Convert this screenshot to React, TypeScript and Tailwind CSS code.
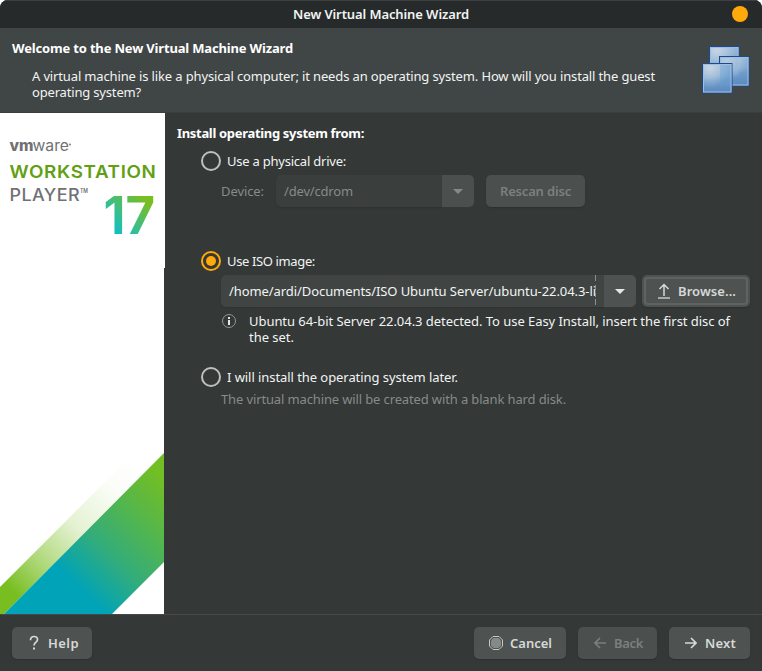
import { useLayoutEffect, useRef, useState, type ReactNode } from "react";

/** A single line of text whose tracking is adjusted so it fills `width` pixels. */
function Line({ width, className = "", children }: { width: number; className?: string; children: string }) {
  const ref = useRef<HTMLSpanElement>(null);
  const [spacing, setSpacing] = useState(0);
  useLayoutEffect(() => {
    if (!ref.current) return;
    const natural = ref.current.getBoundingClientRect().width;
    setSpacing((width - natural) / children.length);
  }, [width, children]);
  return (
    <span
      ref={ref}
      className={`inline-block self-start whitespace-pre leading-4 ${className}`}
      style={{ letterSpacing: `${spacing}px` }}
    >
      {children}
    </span>
  );
}

function Radio({ checked = false }: { checked?: boolean }) {
  return (
    <span
      className={`flex size-5 shrink-0 items-center justify-center rounded-full border-2 ${
        checked ? "border-[#ffa90a]" : "border-[#bdc0be]"
      }`}
    >
      {checked && <span className="size-[10px] rounded-full bg-[#ffa90a]" />}
    </span>
  );
}

function Caret({ className }: { className: string }) {
  return (
    <svg width="10" height="5" viewBox="0 0 10 5" className={className}>
      <path d="M0 0h10L5 5z" fill="currentColor" />
    </svg>
  );
}

function Button({ className, children }: { className: string; children: ReactNode }) {
  return <button className={`flex h-8 items-center rounded-[5px] font-semibold shadow-[0_1px_1px_#2d302f] ${className}`}>{children}</button>;
}

function MachinesIcon() {
  return (
    <svg width="48" height="48" viewBox="0 0 48 48">
      <defs>
        <linearGradient id="pane" x1="0.3" y1="0" x2="0.4" y2="1">
          <stop offset="0" stopColor="#9dbad8" />
          <stop offset="0.45" stopColor="#82a9d1" />
          <stop offset="0.6" stopColor="#6e9bc9" />
          <stop offset="1" stopColor="#5c8ac0" />
        </linearGradient>
        <radialGradient id="shine" cx="0.25" cy="0.15" r="0.7">
          <stop offset="0" stopColor="#dbe2ea" stopOpacity="0.7" />
          <stop offset="1" stopColor="#dbe2ea" stopOpacity="0" />
        </radialGradient>
      </defs>
      {[
        [7, 0],
        [17, 10],
        [0, 17],
      ].map(([x, y]) => (
        <g key={x}>
          <rect x={x + 0.5} y={y + 0.5} width="29.500" height="29.500" fill="url(#pane)" stroke="#1f4a8a" />
          <rect x={x + 1} y={y + 1} width="28" height="28" fill="url(#shine)" />
          <rect x={x + 1.5} y={y + 1.5} width="27.500" height="27.500" fill="none" stroke="#9dbde2" />
        </g>
      ))}
      <path d="M18 19h10v21H18z" fill="#66a0d8" opacity="0.35" />
      <path d="M19 12h17v17H31V17H19z" fill="#8db5dc" opacity="0.3" />
    </svg>
  );
}

function Branding() {
  return (
    <svg width="165" height="155" viewBox="0 0 165 155" fontFamily="Inter, 'Liberation Sans', sans-serif">
      <defs>
        <linearGradient id="version" gradientUnits="userSpaceOnUse" x1="108" y1="121" x2="142" y2="84">
          <stop offset="0" stopColor="#00c1d5" />
          <stop offset="0.5" stopColor="#3dbe86" />
          <stop offset="1" stopColor="#78be20" />
        </linearGradient>
      </defs>
      <text x="9.5" y="38" fontSize="15" fontWeight="800" fill="#717074" textLength="24" lengthAdjust="spacingAndGlyphs">vm</text>
      <text x="32.5" y="38" fontSize="15" fontWeight="400" fill="#717074" textLength="36.5" lengthAdjust="spacingAndGlyphs">ware</text>
      <circle cx="70" cy="31.500" r="0.9" fill="#717074" />
      <text x="9.5" y="64.5" fontSize="17.8" fontWeight="600" fill="#61a014" letterSpacing="0.6" textLength="147" lengthAdjust="spacingAndGlyphs">WORKSTATION</text>
      <text x="9.5" y="87.5" fontSize="17" fontWeight="500" fill="#717074" letterSpacing="0.4" textLength="70.5" lengthAdjust="spacingAndGlyphs">PLAYER</text>
      <text x="80" y="79.5" fontSize="5.5" fontWeight="600" fill="#717074" textLength="8" lengthAdjust="spacingAndGlyphs">TM</text>
      <text x="103.5" y="121" fontSize="52" fontWeight="650" fill="url(#version)" textLength="51.5" lengthAdjust="spacingAndGlyphs">17</text>
    </svg>
  );
}

function Stripes() {
  return (
    <svg width="164" height="164" viewBox="0 0 164 164">
      <defs>
        <linearGradient id="band" gradientUnits="userSpaceOnUse" x1="60" y1="127" x2="160" y2="27">
          <stop offset="0" stopColor="#00a3b8" />
          <stop offset="0.04" stopColor="#00a3b8" />
          <stop offset="0.38" stopColor="#35ad78" />
          <stop offset="0.7" stopColor="#55b64b" />
          <stop offset="1" stopColor="#72be25" />
        </linearGradient>
        <linearGradient id="fade" gradientUnits="userSpaceOnUse" x1="14" y1="143" x2="142" y2="15">
          <stop offset="0" stopColor="#78be20" />
          <stop offset="0.22" stopColor="#78be20" stopOpacity="0.6" />
          <stop offset="0.5" stopColor="#78be20" stopOpacity="0.2" />
          <stop offset="0.8" stopColor="#78be20" stopOpacity="0.03" />
          <stop offset="1" stopColor="#78be20" stopOpacity="0" />
        </linearGradient>
      </defs>
      <path d="M0 137L137 0h27v3L4 164H0z" fill="url(#fade)" />
      <path d="M4 164L164 3v109l-52 52z" fill="url(#band)" />
    </svg>
  );
}

export default function App() {
  return (
    <div className="h-[671px] w-[762px] overflow-hidden bg-white font-['Noto_Sans','Open_Sans',sans-serif] text-[13px] leading-4 text-[#f2f4f3]">
      <div className="flex h-full flex-col overflow-hidden rounded-t-lg bg-[#343837]">
        <header className="flex h-7 shrink-0 items-start border-t border-[#3d4141] bg-[#262a2a] pl-[293px] pr-[14px] pt-[5px]">
          <Line width={176} className="font-semibold">New Virtual Machine Wizard</Line>
          <span className="ml-auto size-4 rounded-full bg-[#ffa90a]" />
        </header>

        <section className="flex h-[85px] shrink-0 border-b border-[#3a3e3d] bg-[#404545] pl-3 pr-3">
          <div className="flex flex-col pt-3">
            <Line width={281} className="font-bold text-white">Welcome to the New Virtual Machine Wizard</Line>
            <div className="mt-3 flex flex-col pl-5">
              <Line width={623}>A virtual machine is like a physical computer; it needs an operating system. How will you install the guest</Line>
              <Line width={109}>operating system?</Line>
            </div>
          </div>
          <div className="ml-auto pt-[18px]">
            <MachinesIcon />
          </div>
        </section>

        <main className="flex h-[501px] shrink-0">
          <aside className="flex w-[165px] shrink-0 flex-col">
            <div className="h-[155px] bg-white">
              <Branding />
            </div>
            <div className="flex w-[164px] grow items-end bg-white">
              <Stripes />
            </div>
          </aside>

          <div className="flex flex-col pl-3 pt-3">
            <Line width={187} className="font-bold text-white">Install operating system from:</Line>
            <div className="flex flex-col pl-6">
              <label className="mt-[10px] flex h-5 items-center">
                <Radio />
                <Line width={119} className="ml-[6px] mt-[2px]">Use a physical drive:</Line>
              </label>
              <div className="mt-1 flex h-8 items-center pl-5 text-[#868b89]">
                <Line width={43} className="mt-2">Device:</Line>
                <div className="ml-3 flex h-8 w-[166px] rounded-l-[5px] bg-[#3a3e3d] pl-2 pt-2 shadow-[0_1px_1px_#303332]">
                  <Line width={69}>/dev/cdrom</Line>
                </div>
                <div className="flex h-8 w-8 items-center justify-center rounded-r-[5px] bg-[#4b4f4e]">
                  <Caret className="text-[#858a88]" />
                </div>
                <Button className="ml-3 w-[99px] bg-[#4b4f4e] pl-[14px] text-[#7b807e]">
                  <Line width={71} className="mt-2">Rescan disc</Line>
                </Button>
              </div>

              <label className="mt-11 flex h-5 items-center">
                <Radio checked />
                <Line width={88} className="ml-[6px] mt-[2px]">Use ISO image:</Line>
              </label>
              <div className="mt-1 flex h-8 pl-5">
                <div className="flex w-[383px] rounded-l-[5px] bg-[#404544] pl-2 shadow-[0_1px_1px_#303332]">
                  <div className="relative w-[367px] pt-2">
                    <Line width={367}>/home/ardi/Documents/ISO Ubuntu Server/ubuntu-22.04.3-li</Line>
                    <svg className="absolute right-0 top-0" width="1" height="32">
                      <path d="M.5 0v6M.5 10v5M.5 18v4M.5 24v6" stroke="#8b908e" />
                    </svg>
                  </div>
                </div>
                <div className="flex w-8 items-center justify-center rounded-r-[5px] bg-[#4e5351]">
                  <Caret className="text-[#e6e8e7]" />
                </div>
                <Button className="ml-[6px] w-[108px] bg-[#4e5351] p-[2px] text-[#d6d9d7]">
                  <span className="flex h-full w-full items-center rounded-[4px] border-2 border-[#5f6462] pl-[12px]">
                    <svg width="12" height="16" viewBox="0 0 12 16" fill="none">
                      <path d="M6 13V1.5M1.5 6L6 1.5L10.500 6" stroke="#d6d9d7" strokeWidth="1.5" />
                      <path d="M0 15h12" stroke="#a4a8a6" strokeWidth="2" />
                    </svg>
                    <Line width={58} className="ml-2 mt-[4px]">Browse...</Line>
                  </span>
                </Button>
              </div>
              <div className="mt-[6px] flex pl-5">
                <svg width="16" height="16" viewBox="0 0 16 16" className="shrink-0">
                  <circle cx="8" cy="8" r="6.500" fill="none" stroke="#929694" />
                  <path d="M7 4h2v2H7zM7 7h2v5H7z" fill="#e6e8e7" />
                </svg>
                <div className="ml-3 flex flex-col">
                  <Line width={481}>Ubuntu 64-bit Server 22.04.3 detected. To use Easy Install, insert the first disc of</Line>
                  <Line width={45}>the set.</Line>
                </div>
              </div>

              <label className="mt-[22px] flex h-5 items-center">
                <Radio />
                <Line width={231} className="ml-[6px] mt-[2px]">I will install the operating system later.</Line>
              </label>
              <div className="mt-1 flex pl-5 text-[#868b89]">
                <Line width={345}>The virtual machine will be created with a blank hard disk.</Line>
              </div>
            </div>
          </div>
        </main>

        <footer className="flex grow items-start border-t border-[#454948] px-3 pt-3 text-[#d6d9d7]">
          <Button className="w-20 bg-[#4e5351] pl-[17px]">
            <svg width="10" height="16" viewBox="0 0 10 16" fill="none" stroke="currentColor" strokeWidth="1.7">
              <path d="M1.500 5.300C1.500 2.600 2.800 1.500 5 1.500S8.500 2.800 8.500 4.700C8.500 7 5 7.200 5 10.500" />
              <path d="M4 13.500h2" strokeWidth="2" />
            </svg>
            <Line width={31} className="ml-[9px] mt-2">Help</Line>
          </Button>
          <Button className="ml-auto w-[92px] bg-[#4e5351] pl-[14px]">
            <svg width="16" height="16" viewBox="0 0 16 16">
              <path d="M5 1.500h6L14.500 5v6L11 14.500H5L1.500 11V5z" fill="none" stroke="#c4c7c5" />
              <path d="M5.500 3h5L13 5.500v5L10.500 13h-5L3 10.500v-5z" fill="#858a87" />
            </svg>
            <Line width={42} className="ml-[6px] mt-2">Cancel</Line>
          </Button>
          <Button className="ml-3 w-[79px] bg-[#4b4f4e] pl-4 text-[#7b807e]">
            <svg width="12" height="12" viewBox="0 0 12 12" fill="none" stroke="currentColor" strokeWidth="1.7">
              <path d="M12 6H1.500M6 1L1 6l5 5" />
            </svg>
            <Line width={29} className="ml-2 mt-2">Back</Line>
          </Button>
          <Button className="ml-3 w-[81px] bg-[#4e5351] pl-4">
            <svg width="12" height="12" viewBox="0 0 12 12" fill="none" stroke="currentColor" strokeWidth="1.7">
              <path d="M0 6h10.500M6 1l5 5l-5 5" />
            </svg>
            <Line width={31} className="ml-2 mt-2">Next</Line>
          </Button>
        </footer>
      </div>
    </div>
  );
}
